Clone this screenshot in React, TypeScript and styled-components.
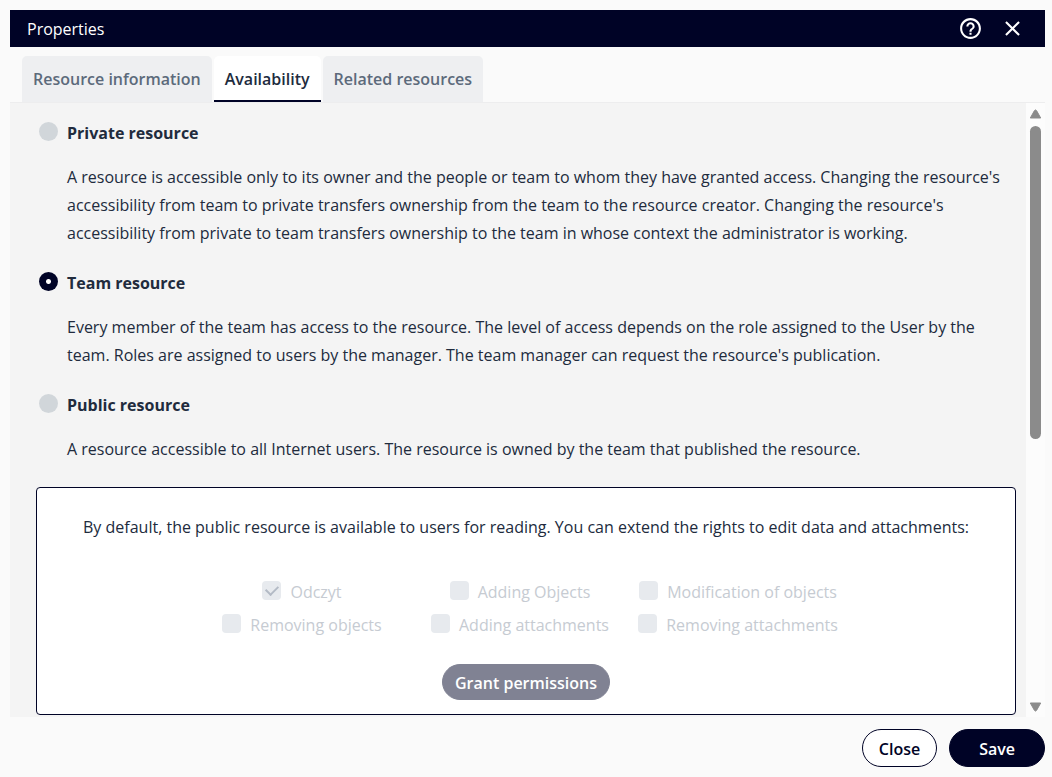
import React, { useState } from "react";
import styled, { createGlobalStyle } from "styled-components";

const navy = "#000326";
const ink = "#212b3d";

const GlobalStyle = createGlobalStyle`
  * { box-sizing: border-box; }
  body {
    margin: 0;
    background: #fafafa;
    color: ${ink};
    font: 16px/28px "Segoe UI", "Open Sans", sans-serif;
  }
  button, input { font: inherit; margin: 0; }
`;

const Dialog = styled.section`
  display: flex;
  flex-direction: column;
  min-height: 100vh;
  padding: 10px 7px 10px 10px;
`;

const TitleBar = styled.header`
  display: flex;
  align-items: center;
  height: 37px;
  padding: 0 20px 0 17px;
  background: ${navy};
  color: #fff;
`;

const Title = styled.h1`
  flex: 1;
  margin: 0;
  font-size: 16px;
  font-weight: 400;
`;

const IconButton = styled.button`
  display: flex;
  padding: 0;
  margin-left: 17px;
  border: 0;
  background: none;
  color: inherit;
  cursor: pointer;
`;

const Tabs = styled.nav`
  display: flex;
  gap: 2px;
  padding: 9px 12px 0;
`;

const Tab = styled.button<{ $active?: boolean }>`
  height: 46px;
  padding: 2px 11px 0;
  border: 0;
  border-bottom: 2px solid ${(p) => (p.$active ? navy : "#eeeff1")};
  border-radius: 5px 5px 0 0;
  background: ${(p) => (p.$active ? "#fff" : "#eeeff1")};
  color: ${(p) => (p.$active ? ink : "#5c6a7b")};
  font-weight: 600;
  white-space: nowrap;
  cursor: pointer;
`;

const Body = styled.div`
  display: flex;
  flex: 1;
  border-top: 1px solid #ededee;
`;

const Panel = styled.div`
  flex: 1;
  min-width: 0;
  padding: 16px 10px 2px 26px;
  background: #f4f4f4;
`;

const Options = styled.div`
  display: flex;
  flex-direction: column;
  gap: 22px;
  padding: 0 8px 0 3px;
`;

const OptionLabel = styled.label`
  display: flex;
  align-items: flex-start;
  gap: 9px;
  font-weight: 700;
`;

const Radio = styled.input`
  appearance: none;
  width: 19px;
  height: 19px;
  margin-top: 3px;
  border-radius: 50%;
  background: #d1d6da;
  &:checked {
    background: radial-gradient(circle, #fff 2px, ${navy} 3px);
  }
`;

const OptionText = styled.p`
  margin: 16px 0 0 28px;
`;

const Permissions = styled.div`
  display: flex;
  flex-direction: column;
  align-items: center;
  margin-top: 24px;
  padding: 25px 14px 14px;
  border: 1px solid ${navy};
  border-radius: 4px;
  background: #fff;
`;

const Intro = styled.p`
  margin: 0;
`;

const CheckGrid = styled.div`
  display: grid;
  grid-template-columns: repeat(3, 218px);
  row-gap: 5px;
  margin: 37px 0 25px;
`;

const CheckLabel = styled.label`
  display: flex;
  justify-content: center;
  gap: 9px;
  padding-right: 12px;
  color: #c6cbd2;
  white-space: nowrap;
`;

const Checkbox = styled.input`
  appearance: none;
  width: 19px;
  height: 19px;
  margin-top: 3px;
  border-radius: 4px;
  background: #e7eaee;
  display: grid;
  place-items: center;
  &:checked::before {
    content: "";
    width: 10px;
    height: 6px;
    margin-bottom: 4px;
    border: solid #b3bac5;
    border-width: 0 0 2px 2px;
    transform: rotate(-45deg);
  }
`;

const pillPadding = { outline: 16, solid: 29, muted: 12 };

const Pill = styled.button<{ $variant: "outline" | "solid" | "muted" }>`
  height: ${(p) => (p.$variant === "muted" ? 36 : 38)}px;
  padding: 2px ${(p) => pillPadding[p.$variant]}px 0;
  border: 1px solid ${(p) => (p.$variant === "muted" ? "#808293" : navy)};
  border-radius: 19px;
  background: ${(p) => ({ outline: "#fff", solid: navy, muted: "#808293" })[p.$variant]};
  color: ${(p) => (p.$variant === "outline" ? navy : "#fff")};
  font-weight: 600;
  white-space: nowrap;
`;

const ScrollTrack = styled.div`
  display: flex;
  flex-direction: column;
  align-items: center;
  width: 19px;
  padding: 6px 0 5px;
  background: #fcfcfc;
`;

const ScrollThumb = styled.div`
  width: 11px;
  height: 313px;
  margin: 7px 0 auto;
  border-radius: 6px;
  background: #8b8b8b;
`;

const Footer = styled.footer`
  display: flex;
  justify-content: flex-end;
  gap: 12px;
  padding-top: 12px;
`;

const Arrow = ({ down }: { down?: boolean }) => (
  <svg width="13" height="10" viewBox="0 0 13 10" aria-hidden="true">
    <path
      d={down ? "M1.3 1h10.4L7.6 8.3q-1.1 1.6-2.2 0Z" : "M1.3 9h10.4L7.6 1.7q-1.1-1.6-2.2 0Z"}
      fill="#8b8b8b"
      stroke="#8b8b8b"
      strokeWidth="1"
      strokeLinejoin="round"
    />
  </svg>
);

const options = [
  {
    id: "private",
    title: "Private resource",
    text: "A resource is accessible only to its owner and the people or team to whom they have granted access. Changing the resource's accessibility from team to private transfers ownership from the team to the resource creator. Changing the resource's accessibility from private to team transfers ownership to the team in whose context the administrator is working.",
  },
  {
    id: "team",
    title: "Team resource",
    text: "Every member of the team has access to the resource. The level of access depends on the role assigned to the User by the team. Roles are assigned to users by the manager. The team manager can request the resource's publication.",
  },
  {
    id: "public",
    title: "Public resource",
    text: "A resource accessible to all Internet users. The resource is owned by the team that published the resource.",
  },
];

const rights = [
  "Odczyt",
  "Adding Objects",
  "Modification of objects",
  "Removing objects",
  "Adding attachments",
  "Removing attachments",
];

const tabs = ["Resource information", "Availability", "Related resources"];

export default function App() {
  const [selected, setSelected] = useState("team");
  return (
    <>
      <GlobalStyle />
      <Dialog>
        <TitleBar>
          <Title>Properties</Title>
          <IconButton aria-label="Help">
            <svg width="25" height="25" viewBox="0 0 24 24" fill="currentColor">
              <path d="M11 18h2v-2h-2v2zm1-16C6.48 2 2 6.48 2 12s4.48 10 10 10 10-4.48 10-10S17.520 2 12 2zm0 18c-4.410 0-8-3.590-8-8s3.590-8 8-8 8 3.590 8 8-3.590 8-8 8zm0-14c-2.210 0-4 1.790-4 4h2c0-1.100.9-2 2-2s2 .9 2 2c0 2-3 1.750-3 5h2c0-2.250 3-2.500 3-5 0-2.210-1.790-4-4-4z" />
            </svg>
          </IconButton>
          <IconButton aria-label="Close dialog">
            <svg width="25" height="25" viewBox="0 0 24 24" fill="currentColor">
              <path d="M19 6.410 17.590 5 12 10.590 6.410 5 5 6.410 10.590 12 5 17.590 6.410 19 12 13.410 17.590 19 19 17.590 13.410 12z" />
            </svg>
          </IconButton>
        </TitleBar>
        <Tabs>
          {tabs.map((t) => (
            <Tab key={t} $active={t === "Availability"}>
              {t}
            </Tab>
          ))}
        </Tabs>
        <Body>
          <Panel>
            <Options>
              {options.map((o) => (
                <div key={o.id}>
                  <OptionLabel>
                    <Radio
                      type="radio"
                      name="availability"
                      checked={selected === o.id}
                      onChange={() => setSelected(o.id)}
                    />
                    {o.title}
                  </OptionLabel>
                  <OptionText>{o.text}</OptionText>
                </div>
              ))}
            </Options>
            <Permissions>
              <Intro>
                By default, the public resource is available to users for reading. You can extend the rights to edit
                data and attachments:
              </Intro>
              <CheckGrid>
                {rights.map((r) => (
                  <CheckLabel key={r}>
                    <Checkbox type="checkbox" disabled defaultChecked={r === "Odczyt"} />
                    {r}
                  </CheckLabel>
                ))}
              </CheckGrid>
              <Pill $variant="muted" disabled>
                Grant permissions
              </Pill>
            </Permissions>
          </Panel>
          <ScrollTrack aria-hidden="true">
            <Arrow />
            <ScrollThumb />
            <Arrow down />
          </ScrollTrack>
        </Body>
        <Footer>
          <Pill $variant="outline">Close</Pill>
          <Pill $variant="solid">Save</Pill>
        </Footer>
      </Dialog>
    </>
  );
}
